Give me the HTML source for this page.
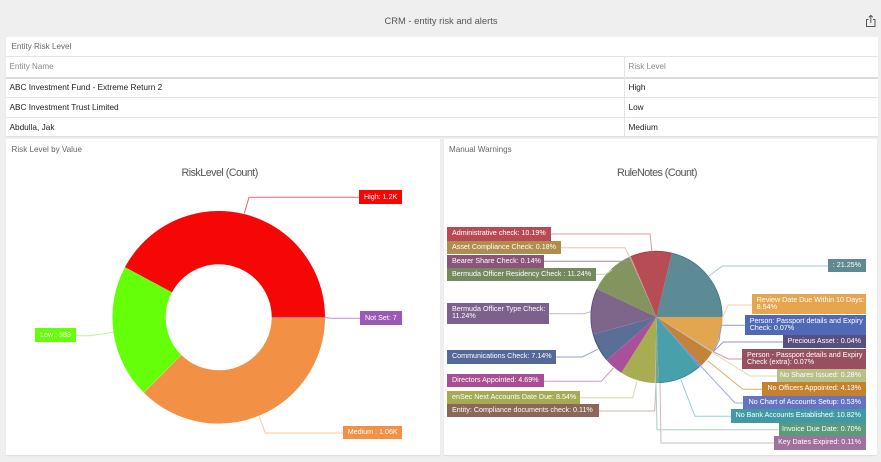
<!DOCTYPE html>
<html><head><meta charset="utf-8"><style>
html,body{margin:0;padding:0;width:881px;height:462px;overflow:hidden;background:#efefef;font-family:"Liberation Sans",sans-serif}
#w{position:absolute;left:0;top:0;width:881px;height:462px;filter:blur(.3px)}
.a{position:absolute}
.p{position:absolute;background:#fff;box-shadow:0 1px 1px #ddd}
.t{position:absolute;white-space:nowrap;line-height:12px}
.l{position:absolute;box-sizing:border-box;color:#fff;font-size:7.15px;line-height:7px;padding:0 5px;display:flex;align-items:center;justify-content:flex-end;text-align:left;white-space:nowrap}
.l.s{justify-content:flex-start}
.h{position:absolute;background:#e4e4e4}
.c{font-size:10.8px;letter-spacing:-.56px;color:#555}
</style></head><body><div id="w">
<div class="t" style="left:0;width:882px;top:14.5px;text-align:center;font-size:9.4px;color:#555">CRM - entity risk and alerts</div>
<svg class="a" style="left:865px;top:14px" width="12" height="14" viewBox="0 0 12 14" fill="none" stroke="#555" stroke-width="1"><path d="M3.5 5.5H1.5V12.5H10V5.5H8M5.8 9V1.5M3.8 3.3L5.8 1.3L7.8 3.3"/></svg>

<div class="p" style="left:5.5px;top:36.5px;width:872px;height:99px"></div>
<div class="h" style="left:5.5px;top:56px;width:872px;height:1px"></div>
<div class="h" style="left:5.5px;top:76.5px;width:872px;height:2px;background:#dcdcdc"></div>
<div class="h" style="left:5.5px;top:97px;width:872px;height:1px"></div>
<div class="h" style="left:5.5px;top:117px;width:872px;height:1px"></div>
<div class="h" style="left:624px;top:56px;width:1px;height:79.5px"></div>
<div class="t" style="left:11.5px;top:41px;font-size:8.1px;color:#666">Entity Risk Level</div>
<div class="t" style="left:9.5px;top:61px;font-size:8.1px;color:#888">Entity Name</div>
<div class="t" style="left:628.5px;top:61px;font-size:8.1px;color:#888">Risk Level</div>
<div class="t" style="left:9.5px;top:81.8px;font-size:8.25px;color:#222">ABC Investment Fund - Extreme Return 2</div>
<div class="t" style="left:628.5px;top:81.8px;font-size:8.25px;color:#222">High</div>
<div class="t" style="left:9.5px;top:101.8px;font-size:8.25px;color:#222">ABC Investment Trust Limited</div>
<div class="t" style="left:628.5px;top:101.8px;font-size:8.25px;color:#222">Low</div>
<div class="t" style="left:9.5px;top:121.8px;font-size:8.25px;color:#222">Abdulla, Jak</div>
<div class="t" style="left:628.5px;top:121.8px;font-size:8.25px;color:#222">Medium</div>

<div class="p" style="left:5.5px;top:139px;width:434.5px;height:315.5px"></div>
<div class="p" style="left:443.7px;top:139px;width:433.5px;height:315.5px"></div>
<div class="t" style="left:11.5px;top:143.7px;font-size:8.1px;color:#666">Risk Level by Value</div>
<div class="t" style="left:449px;top:143.7px;font-size:8.1px;color:#666">Manual Warnings</div>
<div class="t c" style="left:181.5px;top:167px">RiskLevel (Count)</div>
<div class="t c" style="left:617px;top:167px">RuleNotes (Count)</div>

<svg class="a" style="left:0;top:0" width="881" height="462" viewBox="0 0 881 462" fill="none">
<g transform="translate(218.7 317.3)" stroke-width="53.3">
<circle r="79.65" pathLength="360" stroke="#f70606" stroke-dasharray="151.9 360" transform="rotate(208.1)"/>
<circle r="79.65" pathLength="360" stroke="#66ff0a" stroke-dasharray="73.2 360" transform="rotate(134.9)"/>
<circle r="79.65" pathLength="360" stroke="#f29145" stroke-dasharray="134.9 360" transform="rotate(0)"/>
</g>
<path d="M272 317.2H325" stroke="#9b59b6" stroke-width=".7"/>
<g stroke-width="1">
<path d="M359 197.3H249L244.3 213.3" stroke="#e8686c"/>
<path d="M360 318.3H330L325 317.3" stroke="#c08fd4"/>
<path d="M342.7 433H265.3L259.3 416.7" stroke="#f8c9a2"/>
<path d="M76 335.7H90L113.3 332.3" stroke="#b0ff85"/>
</g>

<g transform="translate(656.5 317)" stroke-width="66">
<circle r="33" pathLength="360" stroke="#5d8b95" stroke-dasharray="76.5 360" transform="rotate(-76.47)"/>
<circle r="33" pathLength="360" stroke="#e3a650" stroke-dasharray="30.74 360" transform="rotate(0.03)"/>
<circle r="33" pathLength="360" stroke="#7284c4" stroke-dasharray=".25 360" transform="rotate(30.77)"/>
<circle r="33" pathLength="360" stroke="#7a7399" stroke-dasharray=".14 360" transform="rotate(31.02)"/>
<circle r="33" pathLength="360" stroke="#a9707c" stroke-dasharray=".25 360" transform="rotate(31.16)"/>
<circle r="33" pathLength="360" stroke="#c4cb9b" stroke-dasharray="1.01 360" transform="rotate(31.41)"/>
<circle r="33" pathLength="360" stroke="#c4823a" stroke-dasharray="14.87 360" transform="rotate(32.42)"/>
<circle r="33" pathLength="360" stroke="#7d88cc" stroke-dasharray="1.91 360" transform="rotate(47.29)"/>
<circle r="33" pathLength="360" stroke="#48a0ab" stroke-dasharray="38.95 360" transform="rotate(49.2)"/>
<circle r="33" pathLength="360" stroke="#6fa88e" stroke-dasharray="2.52 360" transform="rotate(88.15)"/>
<circle r="33" pathLength="360" stroke="#b38ab2" stroke-dasharray=".4 360" transform="rotate(90.67)"/>
<circle r="33" pathLength="360" stroke="#a0806f" stroke-dasharray=".4 360" transform="rotate(91.07)"/>
<circle r="33" pathLength="360" stroke="#a8ad52" stroke-dasharray="30.74 360" transform="rotate(91.47)"/>
<circle r="33" pathLength="360" stroke="#a8509a" stroke-dasharray="16.88 360" transform="rotate(122.21)"/>
<circle r="33" pathLength="360" stroke="#5a6e96" stroke-dasharray="25.7 360" transform="rotate(139.09)"/>
<circle r="33" pathLength="360" stroke="#7d6689" stroke-dasharray="40.46 360" transform="rotate(164.79)"/>
<circle r="33" pathLength="360" stroke="#84945f" stroke-dasharray="40.46 360" transform="rotate(205.25)"/>
<circle r="33" pathLength="360" stroke="#9c6f8e" stroke-dasharray=".5 360" transform="rotate(245.71)"/>
<circle r="33" pathLength="360" stroke="#c4a878" stroke-dasharray=".65 360" transform="rotate(246.21)"/>
<circle r="33" pathLength="360" stroke="#b84c55" stroke-dasharray="36.67 360" transform="rotate(246.86)"/>
</g>
<g transform="translate(656.5 317)" stroke-width=".9">
<circle r="65.6" pathLength="360" stroke="#3f7d88" stroke-dasharray="76.5 360" transform="rotate(-76.47)"/>
<circle r="65.6" pathLength="360" stroke="#5d5080" stroke-dasharray="40.46 360" transform="rotate(164.79)"/>
<circle r="65.6" pathLength="360" stroke="#3f5480" stroke-dasharray="25.7 360" transform="rotate(139.09)"/>
<circle r="65.6" pathLength="360" stroke="#2f8a96" stroke-dasharray="38.95 360" transform="rotate(49.2)"/>
<circle r="65.6" pathLength="360" stroke="#a93d47" stroke-dasharray="36.67 360" transform="rotate(246.86)"/>
</g>
<g stroke-width="1">
<path d="M551 234H650L652 251.7" stroke="#dc9aa0"/>
<path d="M561 247.7H625L630 257.7" stroke="#dcccb0"/>
<path d="M544 261.3H630" stroke="#a98a9e"/>
<path d="M595.7 274.3H605.7L612 270" stroke="#c5cfb4"/>
<path d="M548.7 313.7H584L590.7 311.7" stroke="#c5b8cd"/>
<path d="M556.3 357H582.3L597.7 349.3" stroke="#96a3c4"/>
<path d="M544 381.3H601.3L613.3 368" stroke="#cf95c4"/>
<path d="M580.3 397.7H632.7L636.7 381.7" stroke="#d3d7a6"/>
<path d="M598.7 411H654.7L656 383" stroke="#c9b5ac"/>
<path d="M828.3 266H722.3L709 276" stroke="#a5c5cb"/>
<path d="M751.7 305H728.3L722 318" stroke="#f2d2a2"/>
<path d="M744.7 325.3H721L719.3 340L713.3 351.7" stroke="#8c9dd3"/>
<path d="M783 342H723.3L713.3 351.7" stroke="#9a94b5"/>
<path d="M742 359H728.3L713.3 351.7" stroke="#c79aa6"/>
<path d="M777 376H750L711.7 352" stroke="#d8dcb8"/>
<path d="M762.3 389.3H742.7L707.7 360.7" stroke="#dfac73"/>
<path d="M743.3 403H735L700.7 366" stroke="#a1abdc"/>
<path d="M731 416.3H695L680.7 379.3" stroke="#95cdd1"/>
<path d="M778.7 429.7H657L656 383" stroke="#a9d1bd"/>
<path d="M774.3 443H661L660 383" stroke="#cfb5cf"/>
</g>
</svg>

<div class="l s" style="left:359px;top:190.3px;width:43px;height:13.7px;background:#f70606">High: 1.2K</div>
<div class="l s" style="left:360px;top:311.3px;width:42px;height:14px;background:#9b59b6">Not Set: 7</div>
<div class="l s" style="left:342.7px;top:425.7px;width:59.3px;height:13.3px;background:#f29145">Medium : 1.06K</div>
<div class="l s" style="left:35px;top:328.3px;width:41px;height:13.7px;background:#66ff0a">Low : 583</div>

<div class="l s" style="left:447px;top:227.3px;width:104px;height:13.4px;background:#b94a54">Administrative check: 10.19%</div>
<div class="l s" style="left:447px;top:241px;width:114px;height:13px;background:#b08c4f">Asset Compliance Check: 0.18%</div>
<div class="l s" style="left:447px;top:254.5px;width:97px;height:13.2px;background:#8a5578">Bearer Share Check: 0.14%</div>
<div class="l s" style="left:447px;top:267.7px;width:148.7px;height:13px;background:#75895f">Bermuda Officer Residency Check : 11.24%</div>
<div class="l s" style="left:447px;top:303.3px;width:101.7px;height:20.4px;background:#7c618c"><span>Bermuda Officer Type Check:<br>11.24%</span></div>
<div class="l s" style="left:447px;top:350.3px;width:109.3px;height:13.4px;background:#54689a">Communications Check: 7.14%</div>
<div class="l s" style="left:447px;top:374.3px;width:97px;height:13px;background:#aa4d97">Directors Appointed: 4.69%</div>
<div class="l s" style="left:447px;top:391px;width:133.3px;height:13px;background:#a5ab52">enSec Next Accounts Date Due: 8.54%</div>
<div class="l s" style="left:447px;top:404.3px;width:151.7px;height:13px;background:#8b6659">Entity: Compliance documents check: 0.11%</div>

<div class="l" style="left:828.3px;top:259px;width:37.7px;height:13.3px;background:#5f8a92">: 21.25%</div>
<div class="l s" style="left:751.7px;top:294px;width:114.3px;height:20.3px;background:#e6a650"><span>Review Date Due Within 10 Days:<br>8.54%</span></div>
<div class="l s" style="left:744.7px;top:314.7px;width:121.3px;height:20px;background:#4f69b7"><span>Person: Passport details and Expiry<br>Check: 0.07%</span></div>
<div class="l" style="left:783px;top:335px;width:83px;height:13.3px;background:#594f7f">Precious Asset : 0.04%</div>
<div class="l s" style="left:742px;top:348.7px;width:124px;height:20px;background:#96505f"><span>Person - Passport details and Expiry<br>Check (extra): 0.07%</span></div>
<div class="l" style="left:777px;top:369px;width:89px;height:13.3px;background:#b8c088">No Shares Issued: 0.28%</div>
<div class="l" style="left:762.3px;top:382.3px;width:103.7px;height:13.4px;background:#c4822f">No Officers Appointed: 4.13%</div>
<div class="l" style="left:743.3px;top:396px;width:122.7px;height:13.3px;background:#6574c0">No Chart of Accounts Setup: 0.53%</div>
<div class="l" style="left:731px;top:409.3px;width:135px;height:13.4px;background:#3f9aa3">No Bank Accounts Established: 10.82%</div>
<div class="l" style="left:778.7px;top:423px;width:87.3px;height:13.3px;background:#5c9a7c">Invoice Due Date: 0.70%</div>
<div class="l" style="left:774.3px;top:436.3px;width:91.7px;height:13.4px;background:#a0709f">Key Dates Expired: 0.11%</div>
</div></body></html>
